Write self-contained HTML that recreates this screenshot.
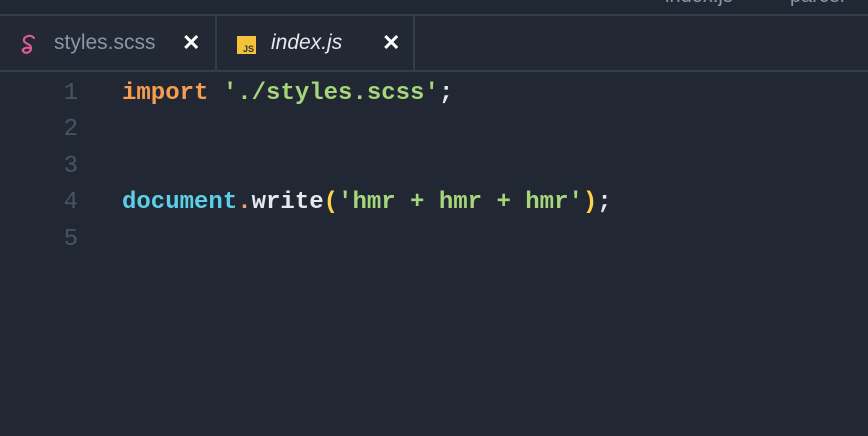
<!DOCTYPE html>
<html><head><meta charset="utf-8"><style>
html,body{margin:0;padding:0;width:868px;height:436px;overflow:hidden;background:#212733;}
.top{position:absolute;left:0;top:0;width:868px;height:14px;background:#212733;overflow:hidden;}
.top span{position:absolute;top:-15px;font:20px "Liberation Sans",sans-serif;color:#8a96aa;}
.bar{position:absolute;left:0;top:14px;width:868px;height:58px;background:#222834;border-top:2px solid #353d4b;border-bottom:2px solid #353d4b;box-sizing:border-box;}
.tab{position:absolute;top:0;height:56px;border-right:2px solid #353d4b;box-sizing:border-box;font:21px "Liberation Sans",sans-serif;}
.tab .t{position:absolute;top:15px;}
.tab .x{position:absolute;top:14px;color:#fff;font-size:22px;font-weight:bold;}
.code{position:absolute;left:0;top:76px;font:24px "Liberation Mono",monospace;}
.ln{position:absolute;width:78px;text-align:right;color:#4b5363;}
.l{position:absolute;left:122px;white-space:pre;font-weight:bold;}
</style></head><body>
<div class="top"><span style="left:665px">index.js</span><span style="left:790px">parcel</span></div>
<div class="bar">
 <div class="tab" style="left:0;width:217px">
  <svg style="position:absolute;left:20px;top:18px" width="20" height="22" viewBox="0 0 20 22"><path d="M14 4C11 0 3 2 4 7c1 3 8 3 7 8-1 4-6 5-8 2-1-2 3-4 6-3" fill="none" stroke="#e05a8e" stroke-width="2.2" stroke-linecap="round"/></svg>
  <span class="t" style="left:54px;color:#8796aa">styles.scss</span>
  <span class="x" style="left:182px">✕</span>
 </div>
 <div class="tab" style="left:217px;width:198px">
  <div style="position:absolute;left:20px;top:20px;width:19px;height:18px;background:#f3c33a;"><span style="position:absolute;right:2px;bottom:0;font:bold 9px 'Liberation Sans',sans-serif;color:#333">JS</span></div>
  <span class="t" style="left:54px;color:#e6e8ec;font-style:italic">index.js</span>
  <span class="x" style="left:165px">✕</span>
 </div>
</div>
<div class="code">
 <div class="ln" style="top:4px">1</div><div class="ln" style="top:40px">2</div><div class="ln" style="top:77px">3</div><div class="ln" style="top:113px">4</div><div class="ln" style="top:150px">5</div>
 <div class="l" style="top:4px"><span style="color:#f69d50">import</span> <span style="color:#a5d67a">'./styles.scss'</span><span style="color:#e6e8ec">;</span></div>
 <div class="l" style="top:113px"><span style="color:#5ccfe6">document</span><span style="color:#f29e74">.</span><span style="color:#e6e8ec">write</span><span style="color:#ffd24a">(</span><span style="color:#a5d67a">'hmr + hmr + hmr'</span><span style="color:#ffd24a">)</span><span style="color:#e6e8ec">;</span></div>
</div>
</body></html>
